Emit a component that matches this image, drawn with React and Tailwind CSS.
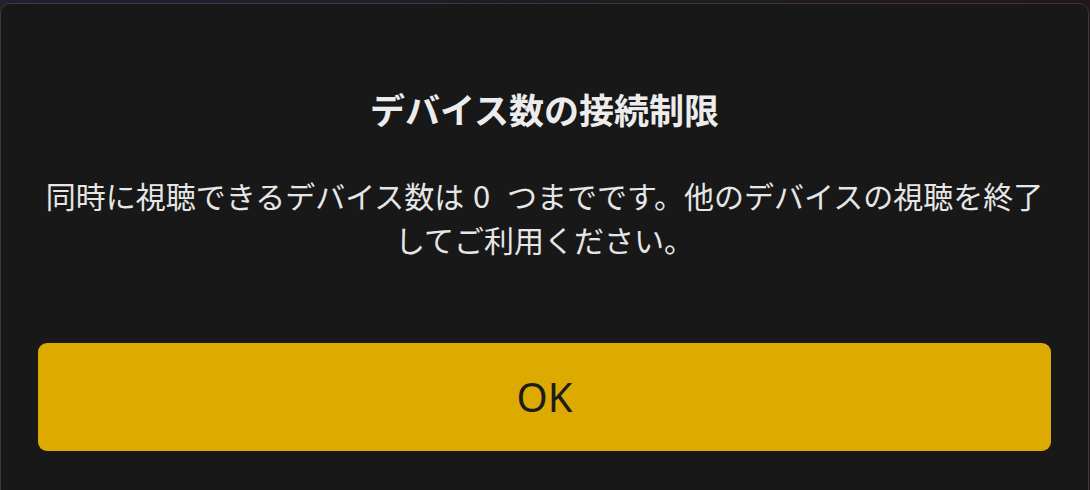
export default function App() {
  return (
    <div className="w-[1090px] h-[490px] overflow-hidden bg-gradient-to-r from-[#1e2232] to-[#23161a] pt-[3px]" style={{ fontFamily: '"Noto Sans CJK JP", "Noto Sans", sans-serif' }}>
      <div className="w-[1089px] h-[500px] bg-[#181818] border border-[#3a3a3a] rounded-t-[10px] px-[37px] flex flex-col">
        <div className="mt-[82px] text-center text-[35px] leading-[46px] font-bold text-[#ececec]">デバイス数の接続制限</div>
        <div className="mt-[41px] text-center text-[30px] leading-[44px] text-[#e6e6e6]">
          同時に視聴できるデバイス数は <span className="inline-block text-[31px] ml-[2px] mr-[10px]">0</span> つまでです。他のデバイスの視聴を終了<br />してご利用ください。
        </div>
        <button className="mt-[82px] h-[108px] w-full rounded-[9px] bg-[#dcaa00] text-[40px] text-[#1c1c1c]" style={{ fontFamily: '"Noto Sans", sans-serif' }}>OK</button>
      </div>
    </div>
  );
}
